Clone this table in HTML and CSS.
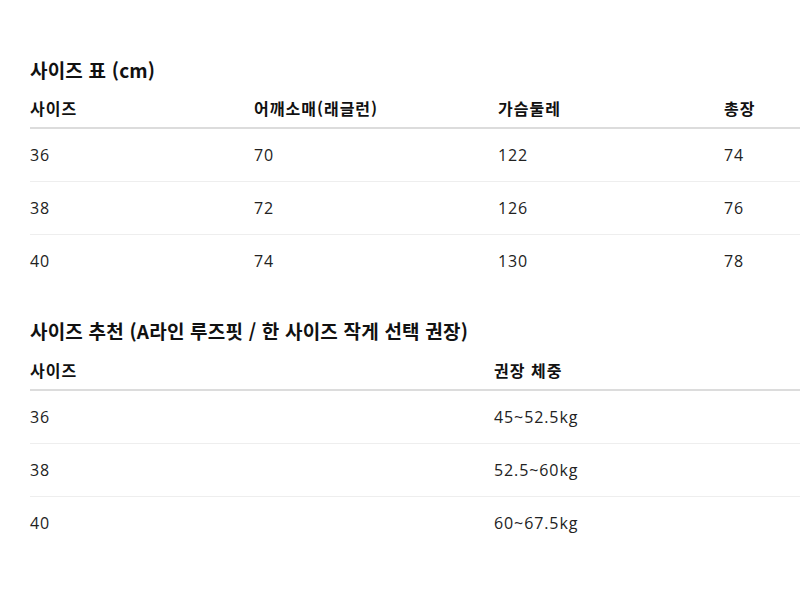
FILE: index.html
```html
<!DOCTYPE html>
<html lang="ko">
<head>
<meta charset="utf-8">
<link rel="stylesheet" href="styles.css">
</head>
<body>
<div class="page">
  <section class="block">
    <h2 class="title">사이즈 표 (cm)</h2>
    <table class="chart">
      <colgroup><col class="c1"><col class="c2"><col class="c3"><col></colgroup>
      <thead>
        <tr><th>사이즈</th><th>어깨소매(래글런)</th><th>가슴둘레</th><th>총장</th></tr>
      </thead>
      <tbody>
        <tr><td>36</td><td>70</td><td>122</td><td>74</td></tr>
        <tr><td>38</td><td>72</td><td>126</td><td>76</td></tr>
        <tr><td>40</td><td>74</td><td>130</td><td>78</td></tr>
      </tbody>
    </table>
  </section>
  <section class="block block-second">
    <h2 class="title title-second">사이즈 추천 (A라인 루즈핏 / 한 사이즈 작게 선택 권장)</h2>
    <table class="chart">
      <colgroup><col class="w1"><col></colgroup>
      <thead>
        <tr><th>사이즈</th><th>권장 체중</th></tr>
      </thead>
      <tbody>
        <tr><td>36</td><td>45~52.5kg</td></tr>
        <tr><td>38</td><td>52.5~60kg</td></tr>
        <tr><td>40</td><td>60~67.5kg</td></tr>
      </tbody>
    </table>
  </section>
</div>
</body>
</html>
```
FILE: styles.css
```css
html, body {
  margin: 0;
  padding: 0;
  background: #fff;
}
body {
  font-family: "Noto Sans CJK KR", "Noto Sans", sans-serif;
  color: #111;
}
.page {
  padding: 57px 0 0 30px;
}
.block-second {
  margin-top: 31px;
}
.title {
  margin: 0 0 15px;
  font-size: 19px;
  line-height: 26px;
  font-weight: 700;
  letter-spacing: 0.2px;
  color: #111;
}
.title-second {
  margin-bottom: 16px;
}
.chart {
  width: 770px;
  border-collapse: collapse;
  table-layout: fixed;
}
.c1 { width: 224px; }
.c2 { width: 244px; }
.c3 { width: 226px; }
.w1 { width: 464px; }
.chart th {
  text-align: left;
  font-size: 16px;
  line-height: 21px;
  font-weight: 700;
  letter-spacing: 1px;
  padding: 0 0 8px;
  border-bottom: 2px solid #dcdcdc;
}
.chart td {
  font-family: "Open Sans", "Noto Sans CJK KR", sans-serif;
  font-size: 16px;
  line-height: 20px;
  letter-spacing: 0.9px;
  padding: 16px 0;
  border-bottom: 1px solid #eeeeee;
  color: #222;
}
.chart tbody tr:last-child td {
  border-bottom: none;
}
```
